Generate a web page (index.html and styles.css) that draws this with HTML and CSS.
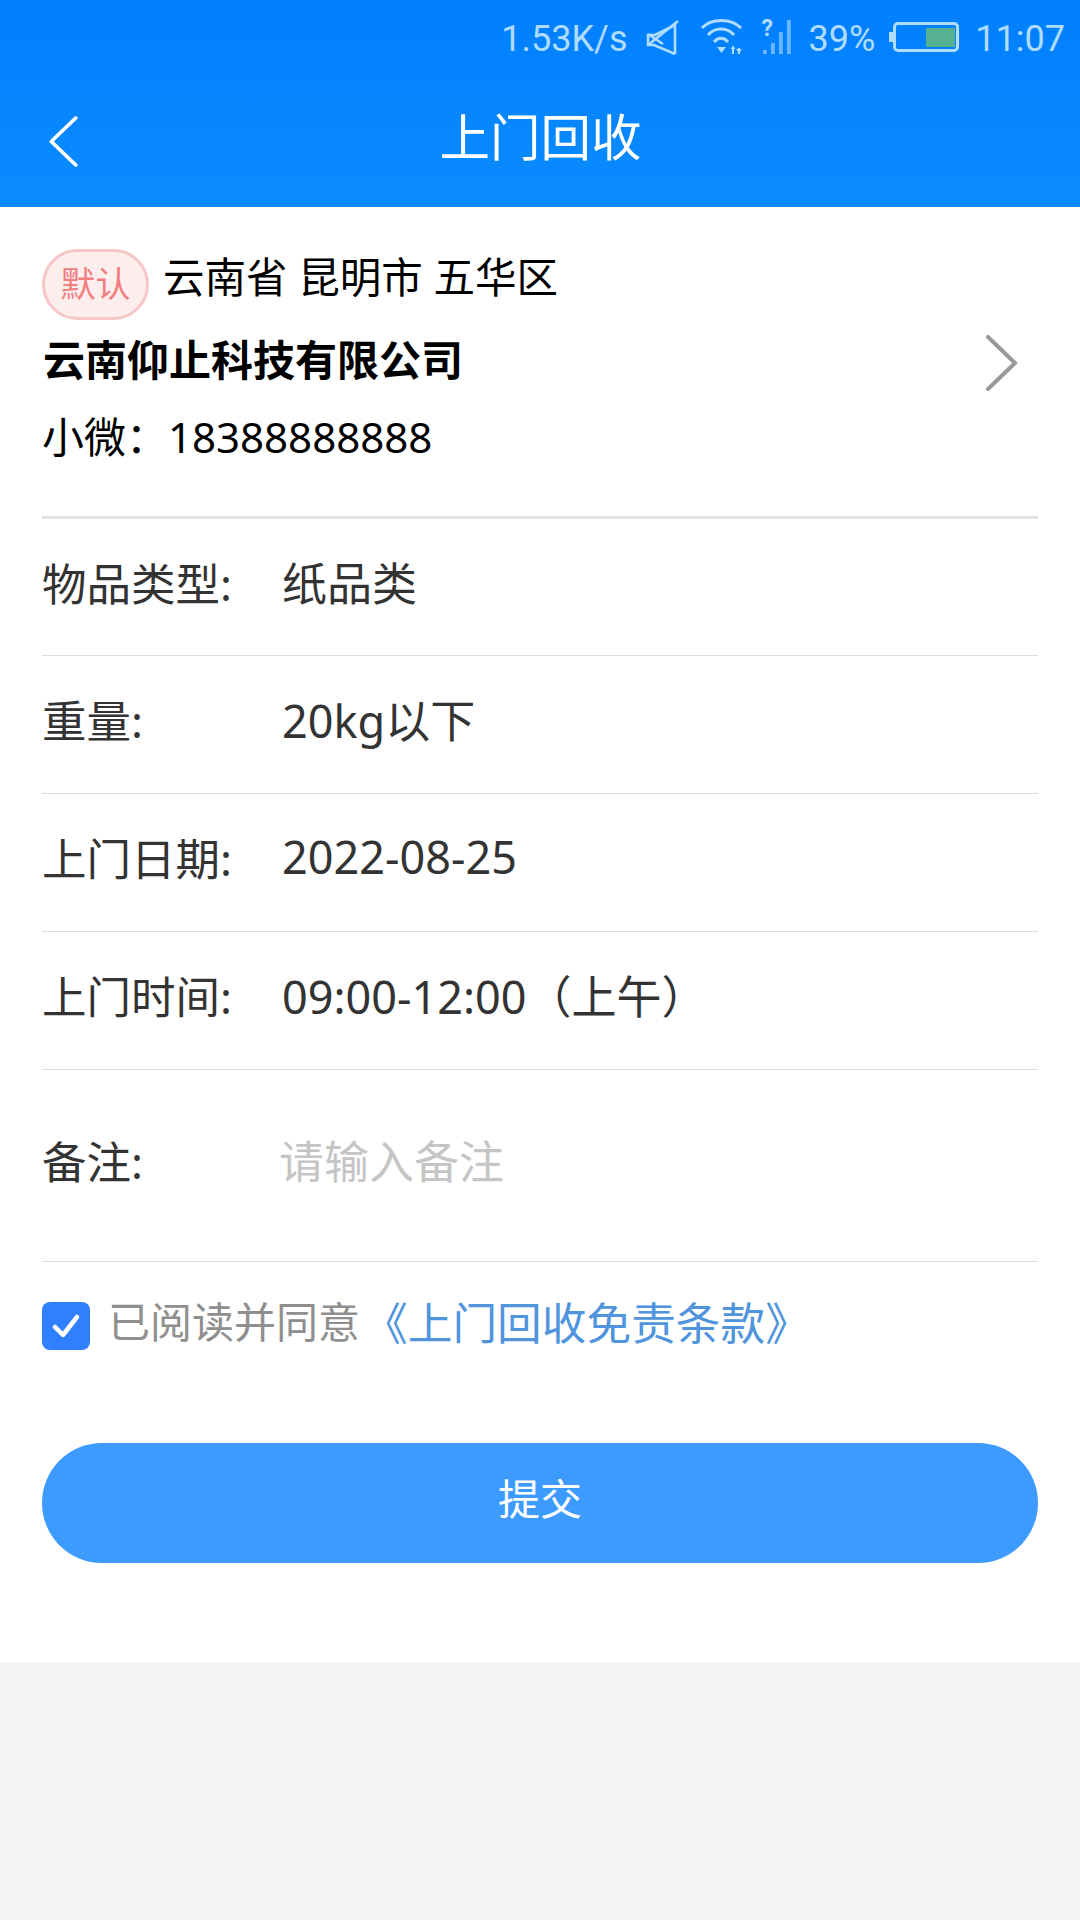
FILE: index.html
```html
<!DOCTYPE html>
<html lang="zh-CN">
<head>
<meta charset="utf-8">
<title>上门回收</title>
<link rel="stylesheet" href="styles.css">
</head>
<body>
<div class="page">
  <header class="header">
    <div class="status">
      <span class="speed">1.53K/s</span>
      <svg class="ic-mute" viewBox="0 0 36 36" fill="none" stroke="#b0dcff" stroke-width="2.600">
        <path d="M29 35V6L9 16H2V26H8L29 35"/>
        <path d="M2 15L17 25"/>
        <path d="M2 26L32 2"/>
      </svg>
      <svg class="ic-wifi" viewBox="0 0 44 36" fill="none" stroke="#b0dcff" stroke-width="3">
        <path d="M2 9C11 -1 31 -1 41 9"/>
        <path d="M8 16C15 8 27 8 34 16"/>
        <path d="M14 23C18 18 24 18 28 23"/>
        <path d="M17 28h9l-4.500 6z" fill="#b0dcff" stroke="none"/>
        <path d="M33 35V29M39 35V29" stroke-width="2"/>
        <path d="M30.500 30L33 26.500L35.500 30zM36 30H42L39 34z" fill="#b0dcff" stroke="none"/>
      </svg>
      <span class="signal">
        <svg class="ic-signal" viewBox="0 0 30 36" fill="#6cb8ff">
          <rect x="0" y="31" width="3.800" height="4"/>
          <rect x="8" y="24" width="3.800" height="11"/>
          <rect x="16" y="13" width="3.800" height="22"/>
          <rect x="24" y="1" width="3.800" height="34"/>
        </svg>
        <span class="q">?</span>
      </span>
      <span class="pct">39%</span>
      <span class="battery"><span class="cap"></span><span class="level"></span></span>
      <span class="time">11:07</span>
    </div>
    <div class="nav">
      <svg class="back" viewBox="0 0 28 50" fill="none" stroke="#fff" stroke-width="3.600" stroke-linecap="round" stroke-linejoin="round"><path d="M26 2L2 25L26 48"/></svg>
      <h1 class="title">上门回收</h1>
    </div>
  </header>

  <main class="card">
    <section class="address">
      <div class="addr-text">
        <div class="addr-top"><span class="badge">默认</span><span class="region">云南省 昆明市 五华区</span></div>
        <div class="company">云南仰止科技有限公司</div>
        <div class="contact">小微：18388888888</div>
      </div>
      <svg class="more" viewBox="0 0 32 56" fill="none" stroke="#999" stroke-width="4" stroke-linecap="round" stroke-linejoin="miter"><path d="M2 2L29 28L2 54"/></svg>
    </section>
    <div class="row row-first"><span class="label">物品类型:</span><span class="value">纸品类</span></div>
    <div class="row"><span class="label">重量:</span><span class="value">20kg以下</span></div>
    <div class="row"><span class="label">上门日期:</span><span class="value">2022-08-25</span></div>
    <div class="row"><span class="label">上门时间:</span><span class="value">09:00-12:00（上午）</span></div>
    <div class="row row-note"><span class="label">备注:</span><span class="placeholder">请输入备注</span></div>
    <div class="agree">
      <span class="check"><svg viewBox="0 0 48 48" fill="none" stroke="#fff" stroke-width="4.500" stroke-linecap="round" stroke-linejoin="round"><path d="M13 25L21 33L35 15"/></svg></span>
      <span class="agree-text">已阅读并同意<a class="link">《上门回收免责条款》</a></span>
    </div>
    <button class="submit">提交</button>
  </main>
</div>
</body>
</html>
```
FILE: styles.css
```css
* { box-sizing: border-box; margin: 0; padding: 0; }
html, body { height: 100%; }
body {
  background: #f3f5f7;
  font-family: "Noto Sans", "Noto Sans CJK SC", sans-serif;
  color: #333;
}
.page { width: 1080px; min-height: 1920px; display: flex; flex-direction: column; }

.header {
  height: 207px;
  background: linear-gradient(180deg, #007fff 0%, #0a8cff 100%);
  display: flex;
  flex-direction: column;
}
.status {
  height: 78px;
  padding-right: 15px;
  display: flex;
  align-items: center;
  justify-content: flex-end;
  font-family: Roboto, sans-serif;
  font-size: 36px;
  color: #b0dcff;
}
.speed { margin-right: 18px; }
.ic-mute { width: 36px; height: 36px; margin: -4px 18px 0 0; }
.ic-wifi { width: 44px; height: 36px; margin: -4px 19px 0 0; }
.signal { position: relative; display: block; width: 30px; height: 36px; margin: -4px 16px 0 0; }
.ic-signal { display: block; width: 30px; height: 36px; }
.q {
  position: absolute;
  left: -1px;
  top: 0;
  font-size: 23px;
  font-weight: 700;
  line-height: 20px;
  color: #b0dcff;
}
.pct { margin-right: 18px; }
.battery {
  position: relative;
  width: 66px;
  height: 30px;
  border: 3px solid #b0dcff;
  border-radius: 5px;
  margin: -4px 16px 0 0;
  display: flex;
  justify-content: flex-end;
  align-items: center;
  padding-right: 1px;
}
.cap { position: absolute; left: -7px; top: 7px; width: 4px; height: 10px; background: #b0dcff; }
.level { width: 29px; height: 19px; background: #57b190; }

.nav { position: relative; height: 129px; display: flex; align-items: center; justify-content: center; padding-bottom: 10px; }
.back { position: absolute; left: 49px; top: 38px; width: 29px; height: 51px; }
.title { font-size: 50.500px; font-weight: 400; color: #fff; line-height: 1; margin-left: 1px; }

.card { background: #fff; height: 1455px; padding: 0 42px; display: flex; flex-direction: column; }

.address {
  height: 312px;
  border-bottom: 3px solid #e2e2e2;
  display: flex;
  align-items: flex-start;
  justify-content: space-between;
  padding-top: 42px;
  color: #000;
}
.addr-text { display: flex; flex-direction: column; }
.addr-top { display: flex; align-items: center; height: 71px; }
.badge {
  width: 107px;
  height: 71px;
  border: 3px solid #f7c6c6;
  border-radius: 36px;
  background: #fdeeee;
  color: #f27f7f;
  font-size: 35px;
  line-height: 1;
  padding-bottom: 2px;
  display: flex;
  align-items: center;
  justify-content: center;
  margin-right: 14px;
}
.region { font-size: 41.500px; line-height: 1; margin-top: -14px; }
.company { font-size: 42px; font-weight: 700; line-height: 60px; margin: 10px 0 0 1px; }
.contact { font-size: 42px; line-height: 60px; margin-top: 17px; }
.more { width: 32px; height: 56px; margin: 86px 20px 0 0; }

.row {
  height: 138px;
  border-bottom: 1.500px solid #dcdcdc;
  display: flex;
  align-items: center;
  padding-bottom: 12px;
  font-size: 45px;
  color: #333;
}
.row-first { height: 137px; }
.label { width: 240px; flex: none; font-size: 44.500px; }
.row-note { height: 192px; }
.placeholder { color: #c5c5c5; margin-left: -3px; }

.agree { display: flex; align-items: center; margin-top: 40px; height: 48px; }
.check { width: 48px; height: 48px; background: #2f7fff; border-radius: 8px; margin-right: 18px; flex: none; display: block; }
.check svg { display: block; width: 48px; height: 48px; }
.agree-text { font-size: 42px; color: #8f8f8f; line-height: 1; margin-top: -10px; white-space: nowrap; }
.link { color: #4f94dc; font-size: 44.700px; margin-left: 3px; position: relative; top: 2px; }

.submit {
  margin-top: 93px;
  height: 120px;
  border: 0;
  border-radius: 60px;
  background: #3d9bff;
  color: #fff;
  font-family: inherit;
  font-size: 42px;
  line-height: 1;
  padding-bottom: 8px;
}
```
